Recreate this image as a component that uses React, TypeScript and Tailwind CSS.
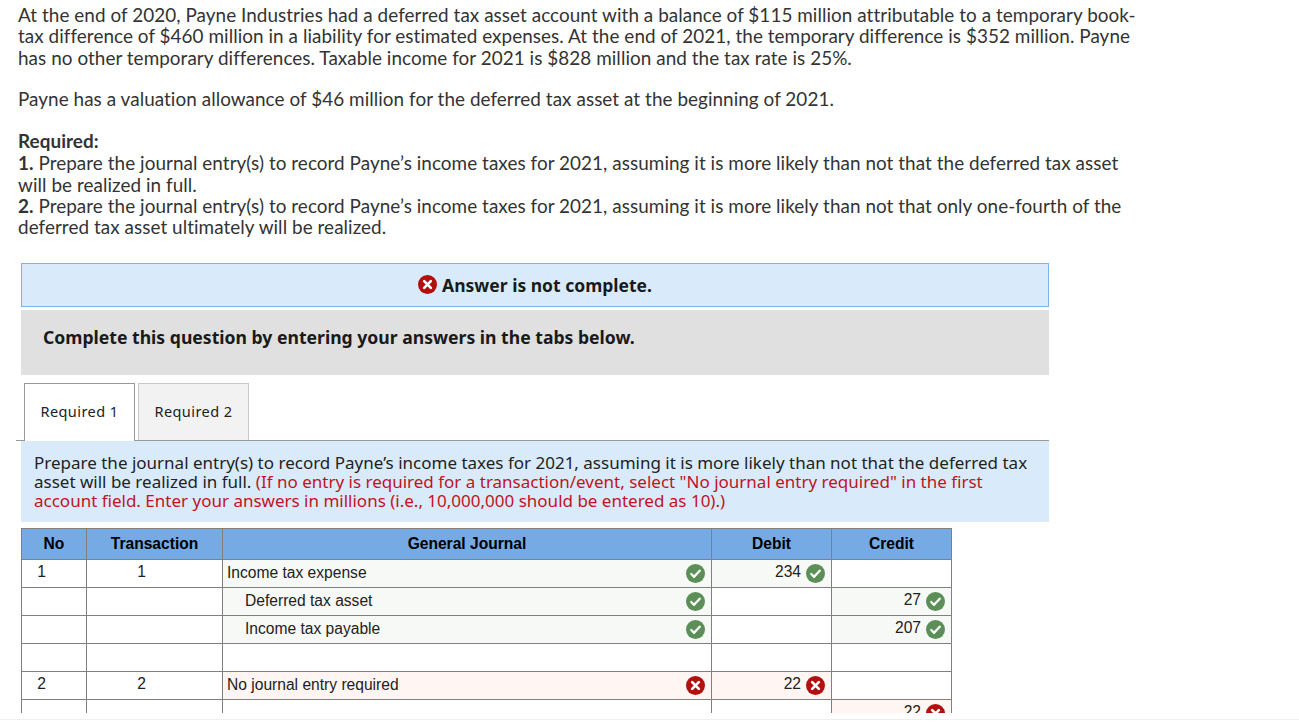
import React from 'react'

const Mark = ({ ok, size = 19 }: { ok: boolean; size?: number }) => (
  <svg width={size} height={size} viewBox="0 0 20 20" className="inline-block shrink-0">
    <circle cx="10" cy="10" r="10" fill={ok ? '#5b8f57' : '#b30f0f'} />
    {ok ? (
      <path d="M5.5 10.5l3 3 6-6.5" fill="none" stroke="#fff" strokeWidth="2.4" strokeLinecap="round" strokeLinejoin="round" />
    ) : (
      <path d="M6.5 6.5l7 7M13.5 6.5l-7 7" fill="none" stroke="#fff" strokeWidth="2.8" strokeLinecap="round" />
    )}
  </svg>
)

type Row = {
  no?: string
  tx?: string
  account?: string
  indent?: boolean
  accountOk?: boolean
  debit?: string
  debitOk?: boolean
  credit?: string
  creditOk?: boolean
}

const rows: Row[] = [
  { no: '1', tx: '1', account: 'Income tax expense', accountOk: true, debit: '234', debitOk: true },
  { account: 'Deferred tax asset', indent: true, accountOk: true, credit: '27', creditOk: true },
  { account: 'Income tax payable', indent: true, accountOk: true, credit: '207', creditOk: true },
  {},
  { no: '2', tx: '2', account: 'No journal entry required', accountOk: false, debit: '22', debitOk: false },
  { credit: '22', creditOk: false },
]

const tint = (ok?: boolean) => (ok === undefined ? 'bg-white' : ok ? 'bg-[#f7f9f6]' : 'bg-[#fff5f3]')

const AmountCell = ({ value, ok }: { value?: string; ok?: boolean }) => (
  <td className={`border border-[#808080] p-0 ${tint(ok)}`}>
    {value && (
      <div className="flex items-center justify-end gap-[5px] pr-[6px]">
        <span className="-mt-[2px]">{value}</span>
        <Mark ok={!!ok} />
      </div>
    )}
  </td>
)

export default function App() {
  return (
    <div className="h-[727px] w-full overflow-hidden bg-white">
      <div className="h-[719px] overflow-hidden border-b border-white">
        <div className="w-[1168px] px-[18px] pt-[4px] font-['Lato',sans-serif] text-[18.9px] leading-[21.3px] tracking-[0.05px] text-[#333]">
          <p>
            At the end of 2020, Payne Industries had a deferred tax asset account with a balance of $115 million attributable to a temporary book-tax difference of $460 million in a liability for estimated expenses. At the end of 2021, the temporary difference is $352 million. Payne has no other temporary differences. Taxable income for 2021 is $828 million and the tax rate is 25%.
          </p>
          <p className="mt-[20px]">Payne has a valuation allowance of $46 million for the deferred tax asset at the beginning of 2021.</p>
          <p className="mt-[21px] font-bold">Required:</p>
          <p className="mt-[1px]"><b>1.</b> Prepare the journal entry(s) to record Payne’s income taxes for 2021, assuming it is more likely than not that the deferred tax asset will be realized in full.</p>
          <p><b>2.</b> Prepare the journal entry(s) to record Payne’s income taxes for 2021, assuming it is more likely than not that only one-fourth of the deferred tax asset ultimately will be realized.</p>
        </div>

        <div className="ml-[21px] mt-[25px] w-[1028px] font-['Noto_Sans',sans-serif]">
          <div className="flex h-[44px] items-center justify-center gap-[5px] border border-[#7fb2e0] bg-[#d9ebfa] text-[17.5px] font-bold text-[#1a1a1a]">
            <Mark ok={false} size={19} />
            <span>Answer is not complete.</span>
          </div>
          <div className="mt-[3px] flex h-[65px] items-start bg-[#e0e0e0] pl-[22px] pt-[14px] text-[17.6px] font-bold text-[#1a1a1a]">
            Complete this question by entering your answers in the tabs below.
          </div>
        </div>

        <div className="ml-[16px] mt-[8px] flex h-[58px] w-[1033px] items-stretch gap-[3px] border-b border-[#999] pl-[8px] font-['Noto_Sans',sans-serif] text-[14.5px] tracking-[0.45px] text-[#222]">
          <div className="-mb-px flex w-[111px] items-center justify-center border border-b-0 border-[#999] bg-white pb-[1px]">Required 1</div>
          <div className="flex w-[111px] items-center justify-center border border-b-0 border-[#c8c8c8] bg-[#f2f2f2]">Required 2</div>
        </div>

        <div className="ml-[21px] h-[81px] w-[1028px] bg-[#d9ebfa] px-[13px] pt-[12px] font-['Noto_Sans',sans-serif] text-[17px] leading-[19px] text-[#222]">
          Prepare the journal entry(s) to record Payne’s income taxes for 2021, assuming it is more likely than not that the deferred tax asset will be realized in full. <span className="text-[#c1121f]">(If no entry is required for a transaction/event, select "No journal entry required" in the first account field. Enter your answers in millions (i.e., 10,000,000 should be entered as 10).)</span>
        </div>

        <div className="ml-[21px] mt-[6px] h-[185px] w-[932px] overflow-hidden">
          <table className="w-[931px] table-fixed border-collapse font-['Liberation_Sans',sans-serif] text-[15.6px] text-[#222]">
            <colgroup>
              <col className="w-[65px]" />
              <col className="w-[136px]" />
              <col className="w-[489px]" />
              <col className="w-[120px]" />
              <col className="w-[120px]" />
            </colgroup>
            <thead>
              <tr className="h-[31px] bg-[#75aae5] text-black">
                <th className="border border-[#808080] font-bold">No</th>
                <th className="border border-[#808080] font-bold">Transaction</th>
                <th className="border border-[#808080] font-bold">General Journal</th>
                <th className="border border-[#808080] font-bold">Debit</th>
                <th className="border border-[#808080] font-bold">Credit</th>
              </tr>
            </thead>
            <tbody>
              {rows.map((r, i) => (
                <tr key={i} className="h-[28px]">
                  <td className="border border-[#808080] p-0 pb-[3px] pr-[25px] text-center">{r.no}</td>
                  <td className="border border-[#808080] p-0 pb-[3px] pr-[26px] text-center">{r.tx}</td>
                  <td className={`border border-[#808080] p-0 ${tint(r.accountOk)}`}>
                    {r.account && (
                      <div className={`flex items-center justify-between pr-[6px] ${r.indent ? 'pl-[22px]' : 'pl-[4px]'}`}>
                        <span>{r.account}</span>
                        <Mark ok={!!r.accountOk} />
                      </div>
                    )}
                  </td>
                  <AmountCell value={r.debit} ok={r.debitOk} />
                  <AmountCell value={r.credit} ok={r.creditOk} />
                </tr>
              ))}
            </tbody>
          </table>
        </div>
      </div>
      <div className="h-[8px] border-t border-[#efefef] bg-white" />
    </div>
  )
}
